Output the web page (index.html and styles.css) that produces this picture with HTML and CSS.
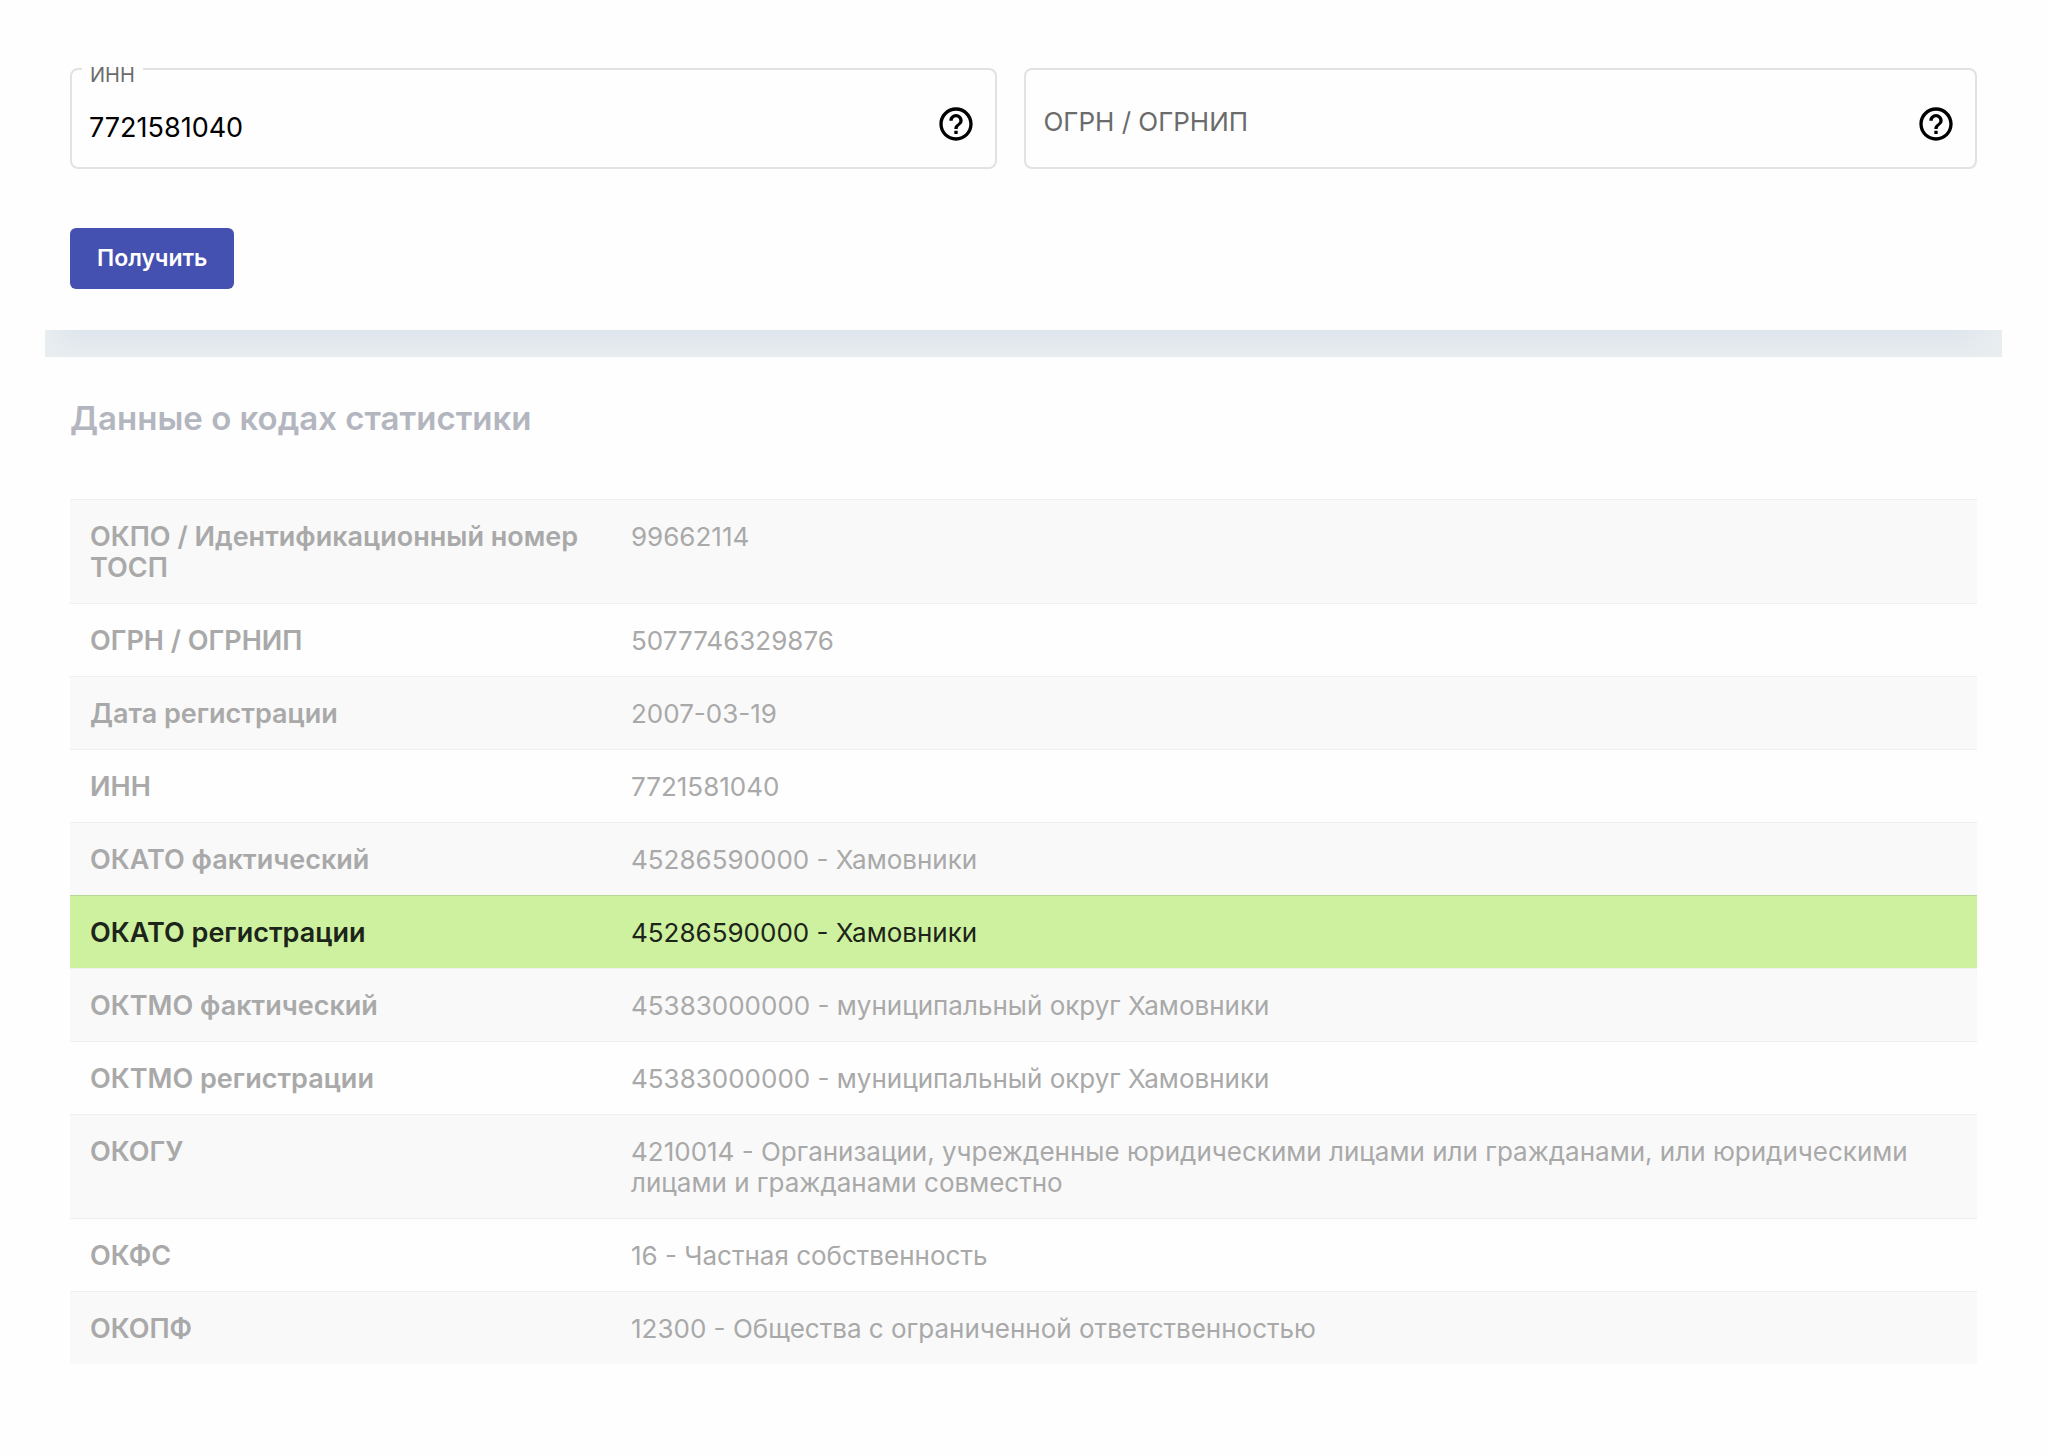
FILE: index.html
```html
<!DOCTYPE html>
<html lang="ru">
<head>
<meta charset="utf-8">
<meta name="viewport" content="width=device-width, initial-scale=1">
<title>Данные о кодах статистики</title>
<link rel="stylesheet" href="styles.css">
</head>
<body>
<main class="page">
  <form class="search">
    <div class="fields">
      <div class="field">
        <label class="field-label field-label-floating" for="inn">ИНН</label>
        <input class="field-input" id="inn" type="text" value="7721581040">
        <button class="help" type="button" aria-label="Подсказка: ИНН">
          <svg class="help-icon" viewBox="0 0 24 24" aria-hidden="true"><path d="M11 18h2v-2h-2v2zm1-16C6.480 2 2 6.480 2 12s4.480 10 10 10 10-4.480 10-10S17.520 2 12 2zm0 18c-4.410 0-8-3.590-8-8s3.590-8 8-8 8 3.590 8 8-3.590 8-8 8zm0-14c-2.210 0-4 1.790-4 4h2c0-1.100.9-2 2-2s2 .9 2 2c0 2-3 1.750-3 5h2c0-2.250 3-2.500 3-5 0-2.210-1.790-4-4-4z"/></svg>
        </button>
      </div>
      <div class="field">
        <label class="field-label" for="ogrn">ОГРН / ОГРНИП</label>
        <input class="field-input" id="ogrn" type="text">
        <button class="help" type="button" aria-label="Подсказка: ОГРН / ОГРНИП">
          <svg class="help-icon" viewBox="0 0 24 24" aria-hidden="true"><path d="M11 18h2v-2h-2v2zm1-16C6.480 2 2 6.480 2 12s4.480 10 10 10 10-4.480 10-10S17.520 2 12 2zm0 18c-4.410 0-8-3.590-8-8s3.590-8 8-8 8 3.590 8 8-3.590 8-8 8zm0-14c-2.210 0-4 1.790-4 4h2c0-1.100.9-2 2-2s2 .9 2 2c0 2-3 1.750-3 5h2c0-2.250 3-2.500 3-5 0-2.210-1.790-4-4-4z"/></svg>
        </button>
      </div>
    </div>
    <button class="submit" type="submit">Получить</button>
  </form>
  <div class="divider"></div>
  <section class="results">
    <h2 class="title">Данные о кодах статистики</h2>
    <table class="codes">
      <tbody>
        <tr><th scope="row">ОКПО / Идентификационный номер ТОСП</th><td>99662114</td></tr>
        <tr><th scope="row">ОГРН / ОГРНИП</th><td>5077746329876</td></tr>
        <tr><th scope="row">Дата регистрации</th><td>2007-03-19</td></tr>
        <tr><th scope="row">ИНН</th><td>7721581040</td></tr>
        <tr><th scope="row">ОКАТО фактический</th><td>45286590000 - Хамовники</td></tr>
        <tr class="highlight"><th scope="row">ОКАТО регистрации</th><td>45286590000 - Хамовники</td></tr>
        <tr><th scope="row">ОКТМО фактический</th><td>45383000000 - муниципальный округ Хамовники</td></tr>
        <tr><th scope="row">ОКТМО регистрации</th><td>45383000000 - муниципальный округ Хамовники</td></tr>
        <tr><th scope="row">ОКОГУ</th><td>4210014 - Организации, учрежденные юридическими лицами или гражданами, или юридическими лицами и гражданами совместно</td></tr>
        <tr><th scope="row">ОКФС</th><td>16 - Частная собственность</td></tr>
        <tr><th scope="row">ОКОПФ</th><td>12300 - Общества с ограниченной ответственностью</td></tr>
      </tbody>
    </table>
  </section>
</main>
</body>
</html>
```
FILE: styles.css
```css
* {
  box-sizing: border-box;
}

body {
  margin: 0;
  background: #fefefe;
  color: #000;
  font-family: Inter, "Liberation Sans", sans-serif;
  font-size: 27px;
  line-height: 31px;
}

button,
input {
  font: inherit;
}

.page {
  padding: 68px 46px 92px 45px;
}

.search {
  padding: 0 25px 41px;
}

.fields {
  display: grid;
  grid-template-columns: 927fr 952fr;
  gap: 27px;
  margin-bottom: 59px;
}

.field {
  position: relative;
  display: flex;
  align-items: center;
  padding: 10px 19px 0 17px;
  height: 101px;
  border: 2px solid #e2e2e2;
  border-radius: 8px;
}

.field-label {
  position: absolute;
  top: 36px;
  left: 17px;
  color: #6b6b6b;
  font-size: 26px;
  line-height: 31px;
}

.field-label-floating {
  top: -10px;
  left: 10px;
  padding: 0 8px;
  background: #fefefe;
  font-size: 20px;
}

.field-input {
  flex: 1;
  min-width: 0;
  padding: 8px 0 0;
  border: 0;
  outline: 0;
  background: transparent;
  color: #000;
}

.help {
  display: flex;
  padding: 0;
  border: 0;
  background: none;
  cursor: pointer;
}

.help-icon {
  width: 40px;
  height: 40px;
  fill: #000;
}

.submit {
  display: block;
  padding: 15px 27px;
  border: 0;
  border-radius: 6px;
  background: #4551b0;
  color: #fff;
  font-size: 23px;
  font-weight: 600;
  cursor: pointer;
}

.divider {
  height: 27px;
  background:
    linear-gradient(to right, #e8edf0, #e8edf000 32px, #e8edf000 calc(100% - 48px), #e8edf0),
    linear-gradient(#dfe5ed, #e7ecef);
}

.results {
  padding: 39px 25px 0;
}

.title {
  margin: 0 0 59px;
  color: #b3b6bf;
  font-size: 33px;
  font-weight: 600;
  line-height: 44px;
}

.codes {
  width: 100%;
  border-spacing: 0;
  table-layout: fixed;
  color: #a9a9a9;
}

.codes th,
.codes td {
  padding: 21px 20px 20px;
  border-top: 1px solid #efefef;
  text-align: left;
  vertical-align: top;
}

.codes th {
  width: 541px;
  font-weight: 600;
}

.codes td {
  font-size: 26px;
  font-weight: 400;
}

.codes tr:nth-child(odd) {
  background: #f9f9f9;
}

.codes tr.highlight {
  background: #cdf19f;
  color: #1d241a;
}

.codes tr.highlight th,
.codes tr.highlight td {
  border-top-color: #b9d798;
}
```
